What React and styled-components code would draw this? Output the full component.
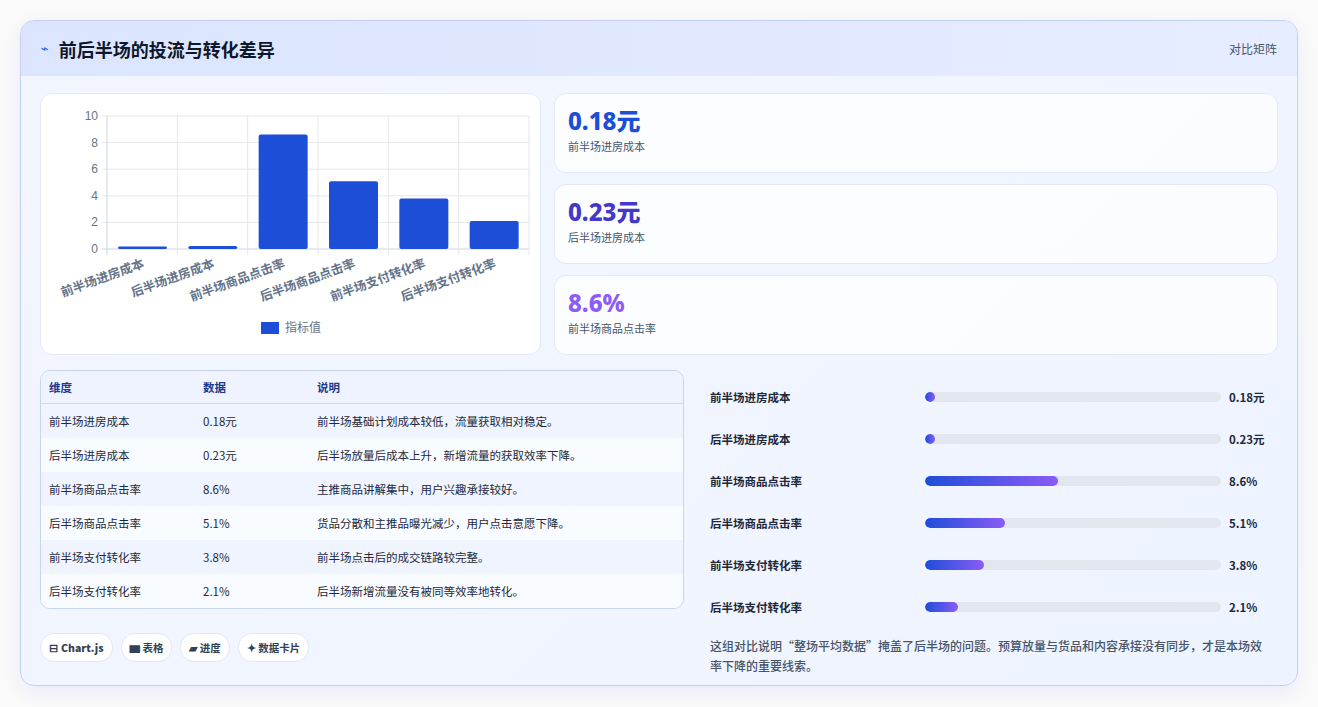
import styled, { createGlobalStyle } from 'styled-components';

const Global = createGlobalStyle`
	body {
		margin: 0;
		background: #fafafa;
		font-family: "Noto Sans CJK SC", "Noto Sans", sans-serif;
		color: #1e293b;
	}
`;

const rows = [
	{ name: '前半场进房成本', value: '0.18元', num: 0.18, bar: 3, note: '前半场基础计划成本较低，流量获取相对稳定。' },
	{ name: '后半场进房成本', value: '0.23元', num: 0.23, bar: 3, note: '后半场放量后成本上升，新增流量的获取效率下降。' },
	{ name: '前半场商品点击率', value: '8.6%', num: 8.6, bar: 45, note: '主推商品讲解集中，用户兴趣承接较好。' },
	{ name: '后半场商品点击率', value: '5.1%', num: 5.1, bar: 27, note: '货品分散和主推品曝光减少，用户点击意愿下降。' },
	{ name: '前半场支付转化率', value: '3.8%', num: 3.8, bar: 20, note: '前半场点击后的成交链路较完整。' },
	{ name: '后半场支付转化率', value: '2.1%', num: 2.1, bar: 11, note: '后半场新增流量没有被同等效率地转化。' },
];

const stats = [
	{ value: '0.18元', label: '前半场进房成本', color: '#1d4ed8' },
	{ value: '0.23元', label: '后半场进房成本', color: '#4338ca' },
	{ value: '8.6%', label: '前半场商品点击率', color: '#8b5cf6' },
];

function BarChart() {
	const x0 = 66, x1 = 488, y0 = 22, y1 = 155;
	const step = (x1 - x0) / 6;
	const h = y1 - y0;
	return (
		<svg width="501" height="262" viewBox="0 0 501 262">
			{[0, 2, 4, 6, 8, 10].map((v) => {
				const y = y1 - (v / 10) * h;
				return (
					<g key={v}>
						<line x1={x0 - 5} x2={x1} y1={y} y2={y} stroke={v === 0 ? '#cbd5e1' : '#e5e7eb'} />
						<text x={x0 - 9} y={y + 4} textAnchor="end" fontSize="12" fill="#64748b" fontFamily="Liberation Sans, sans-serif">{v}</text>
					</g>
				);
			})}
			{[0, 1, 2, 3, 4, 5, 6].map((i) => (
				<line key={i} x1={x0 + i * step} x2={x0 + i * step} y1={y0} y2={y1 + 6} stroke={i === 0 ? '#cbd5e1' : '#e5e7eb'} />
			))}
			{rows.map((r, i) => {
				const bh = Math.max((r.num / 10) * h, 2);
				return (
					<g key={r.name}>
						<rect x={x0 + i * step + 11} y={y1 - bh} width={49} height={bh} rx="2" fill="#1d4ed8" />
						<text
							transform={`translate(${x0 + i * step + 38} ${y1 + 18}) rotate(-20)`}
							textAnchor="end"
							fontSize="12.5"
							fontWeight="700"
							fill="#64748b"
						>
							{r.name}
						</text>
					</g>
				);
			})}
			<rect x="220" y="228" width="18" height="12" fill="#1d4ed8" />
			<text x="244" y="238" fontSize="12" fill="#64748b">指标值</text>
		</svg>
	);
}

export default function App() {
	return (
		<Page>
			<Global />
			<Card>
				<Header>
					<Title>
						<Bolt>⌁</Bolt>
						前后半场的投流与转化差异
					</Title>
					<Tag>对比矩阵</Tag>
				</Header>
				<Body>
					<Top>
						<ChartBox>
							<BarChart />
						</ChartBox>
						<Stats>
							{stats.map((s) => (
								<Stat key={s.label}>
									<StatValue $color={s.color}>{s.value}</StatValue>
									<StatLabel>{s.label}</StatLabel>
								</Stat>
							))}
						</Stats>
					</Top>
					<Bottom>
						<LeftCol>
							<Table>
								<thead>
									<tr>
										<Th>维度</Th>
										<Th>数据</Th>
										<Th>说明</Th>
									</tr>
								</thead>
								<tbody>
									{rows.map((r, i) => (
										<Tr key={r.name} $alt={i % 2 === 1}>
											<Td>{r.name}</Td>
											<Td>{r.value}</Td>
											<Td>{r.note}</Td>
										</Tr>
									))}
								</tbody>
							</Table>
							<Pills>
								<Pill>⊟ <b>Chart.js</b></Pill>
								<Pill>▆ 表格</Pill>
								<Pill>▰ 进度</Pill>
								<Pill>✦ 数据卡片</Pill>
							</Pills>
						</LeftCol>
						<RightCol>
							<Bars>
								{rows.map((r) => (
									<BarRow key={r.name}>
										<BarName>{r.name}</BarName>
										<Track>
											<Fill style={{ width: `${r.bar}%` }} />
										</Track>
										<BarValue>{r.value}</BarValue>
									</BarRow>
								))}
							</Bars>
							<Note>这组对比说明“整场平均数据”掩盖了后半场的问题。预算放量与货品和内容承接没有同步，才是本场效率下降的重要线索。</Note>
						</RightCol>
					</Bottom>
				</Body>
			</Card>
		</Page>
	);
}

const Page = styled.div`
	padding: 20px 20px 22px 20px;
	height: 707px;
	box-sizing: border-box;
`;

const Card = styled.div`
	width: 1278px;
	height: 666px;
	box-sizing: border-box;
	border: 1px solid #c3cff5;
	border-radius: 14px;
	overflow: hidden;
	background: linear-gradient(135deg, #f3f6ff 0%, #eef4ff 100%);
	box-shadow: 0 6px 18px rgba(99, 102, 241, 0.1);
	display: flex;
	flex-direction: column;
`;

const Header = styled.div`
	height: 55px;
	flex: none;
	display: flex;
	align-items: center;
	justify-content: space-between;
	padding: 0 20px;
	background: linear-gradient(90deg, #dbe5ff 0%, #e2e9ff 60%, #e6edff 100%);
`;

const Title = styled.h1`
	margin: 0;
	font-size: 18px;
	font-weight: 700;
	color: #0f172a;
	display: flex;
	align-items: center;
	gap: 10px;
`;

const Bolt = styled.span`
	color: #2563eb;
	font-size: 13px;
	font-family: "DejaVu Sans", sans-serif;
`;

const Tag = styled.span`
	font-size: 12px;
	color: #475569;
`;

const Body = styled.div`
	padding: 17px 19px 0 19px;
	display: flex;
	flex-direction: column;
	gap: 15px;
`;

const Top = styled.div`
	display: flex;
	gap: 13px;
`;

const ChartBox = styled.div`
	width: 501px;
	height: 262px;
	flex: none;
	background: #fff;
	border: 1px solid #e4e9f5;
	border-radius: 12px;
	box-sizing: border-box;
	overflow: hidden;
`;

const Stats = styled.div`
	flex: 1;
	display: flex;
	flex-direction: column;
	gap: 11px;
`;

const Stat = styled.div`
	height: 80px;
	box-sizing: border-box;
	background: rgba(255, 255, 255, 0.75);
	border: 1px solid #e2e8f5;
	border-radius: 12px;
	padding: 10px 13px;
`;

const StatValue = styled.div`
	font-size: 24px;
	font-weight: 800;
	font-family: "Noto Sans", "Noto Sans CJK SC", sans-serif;
	color: ${(p) => p.$color};
	line-height: 34px;
`;

const StatLabel = styled.div`
	font-size: 11px;
	color: #475569;
`;

const Bottom = styled.div`
	display: flex;
	gap: 13px;
`;

const LeftCol = styled.div`
	width: 644px;
	flex: none;
	display: flex;
	flex-direction: column;
	gap: 24px;
`;

const Table = styled.table`
	width: 100%;
	border-collapse: separate;
	border-spacing: 0;
	border: 1px solid #c9d5ee;
	border-radius: 10px;
	overflow: hidden;
	font-size: 11.5px;
	background: #f7f9ff;
`;

const Th = styled.th`
	text-align: left;
	font-weight: 700;
	color: #1e3a8a;
	height: 32px;
	padding: 0 8px;
	border-bottom: 1px solid #cfd9ee;
	background: #eef3ff;
	&:first-child { width: 138px; }
	&:nth-child(2) { width: 98px; }
`;

const Tr = styled.tr`
	background: ${(p) => (p.$alt ? '#f8fbff' : '#eff4ff')};
	& + & td { border-top: 1px solid #e1e7f3; }
`;

const Td = styled.td`
	height: 34px;
	padding: 0 8px;
	color: #1e293b;
`;

const Pills = styled.div`
	display: flex;
	gap: 8px;
`;

const Pill = styled.span`
	height: 27px;
	padding: 0 8px;
	display: inline-flex;
	align-items: center;
	gap: 3px;
	border-radius: 14px;
	background: #fff;
	border: 1px solid #e2e8f0;
	font-size: 10.5px;
	font-weight: 600;
	color: #334155;
`;

const RightCol = styled.div`
	flex: 1;
	display: flex;
	flex-direction: column;
	padding-left: 0;
`;

const Bars = styled.div`
	display: flex;
	flex-direction: column;
	padding-top: 6px;
`;

const BarRow = styled.div`
	height: 42px;
	display: flex;
	align-items: center;
	padding-left: 13px;
`;

const BarName = styled.span`
	width: 215px;
	font-size: 11.5px;
	font-weight: 700;
	color: #1e293b;
`;

const Track = styled.div`
	width: 296px;
	height: 10px;
	border-radius: 5px;
	background: #e2e6ef;
	overflow: hidden;
`;

const Fill = styled.div`
	height: 100%;
	min-width: 10px;
	border-radius: 5px;
	background: linear-gradient(90deg, #1d4ed8, #8b5cf6);
`;

const BarValue = styled.span`
	margin-left: 8px;
	font-size: 11.5px;
	font-weight: 700;
	color: #1e293b;
`;

const Note = styled.p`
	margin: 8px 0 0 13px;
	font-size: 12px;
	line-height: 20px;
	color: #475569;
	font-weight: 500;
	padding-right: 6px;
`;
